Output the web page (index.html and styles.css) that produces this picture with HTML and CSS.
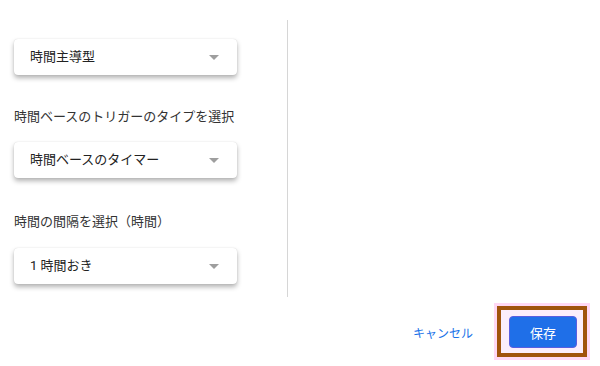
FILE: index.html
```html
<!DOCTYPE html>
<html lang="ja">
<head>
<meta charset="utf-8">
<link rel="stylesheet" href="styles.css">
</head>
<body>
<div class="content">
  <div class="panel">
    <div class="select"><span class="select-text">時間主導型</span><span class="arrow"></span></div>
    <div class="label label-first">時間ベースのトリガーのタイプを選択</div>
    <div class="select"><span class="select-text">時間ベースのタイマー</span><span class="arrow"></span></div>
    <div class="label label-second">時間の間隔を選択（時間）</div>
    <div class="select select-last"><span class="select-text">1 時間おき</span><span class="arrow"></span></div>
  </div>
</div>
<div class="footer">
  <span class="cancel">キャンセル</span>
  <div class="highlight"><button class="save">保存</button></div>
</div>
</body>
</html>
```
FILE: styles.css
```css
html, body {
  margin: 0;
  padding: 0;
  background: #ffffff;
  font-family: "Roboto", "Noto Sans CJK JP", sans-serif;
}
body {
  width: 600px;
  height: 366px;
  overflow: hidden;
}
.content {
  display: flex;
  padding-top: 20px;
}
.panel {
  width: 273px;
  height: 277px;
  padding-left: 14px;
  border-right: 1px solid #d6d6d6;
  box-sizing: content-box;
  display: flex;
  flex-direction: column;
}
.select {
  margin-top: 19px;
  width: 223px;
  height: 36px;
  flex: none;
  box-sizing: border-box;
  border-radius: 4px;
  background: #fff;
  box-shadow: 0 3px 5px rgba(0, 0, 0, 0.3), 0 0 1px rgba(0, 0, 0, 0.18);
  display: flex;
  align-items: center;
  justify-content: space-between;
  padding: 0 18px 0 16px;
}
.label + .select {
  margin-top: 16px;
}
.label + .select-last {
  margin-top: 17px;
}
.select-text {
  font-size: 13px;
  color: #222;
  line-height: 18px;
}
.arrow {
  width: 0;
  height: 0;
  border-left: 5px solid transparent;
  border-right: 5px solid transparent;
  border-top: 5px solid #9e9e9e;
}
.label {
  font-size: 13px;
  line-height: 18px;
  color: #333;
  white-space: nowrap;
}
.label-first {
  margin-top: 33px;
}
.label-second {
  margin-top: 35px;
}
.footer {
  display: flex;
  justify-content: flex-end;
  align-items: center;
  padding-top: 9px;
  padding-right: 13px;
}
.cancel {
  font-size: 12px;
  color: #1a73e8;
  margin-right: 24px;
  margin-top: 1px;
}
.highlight {
  border: 4px solid #a0540c;
  box-shadow: 0 0 0 3px #ffd8f4;
  background: #fbeefb;
  padding: 6px 6px 5px 8px;
  display: flex;
}
.save {
  width: 68px;
  height: 32px;
  border: 1px solid #5a5ee0;
  border-radius: 4px;
  background: #1f6fe8;
  color: #fff;
  font-family: "Roboto", "Noto Sans CJK JP", sans-serif;
  font-size: 13px;
  padding: 0;
}
```
